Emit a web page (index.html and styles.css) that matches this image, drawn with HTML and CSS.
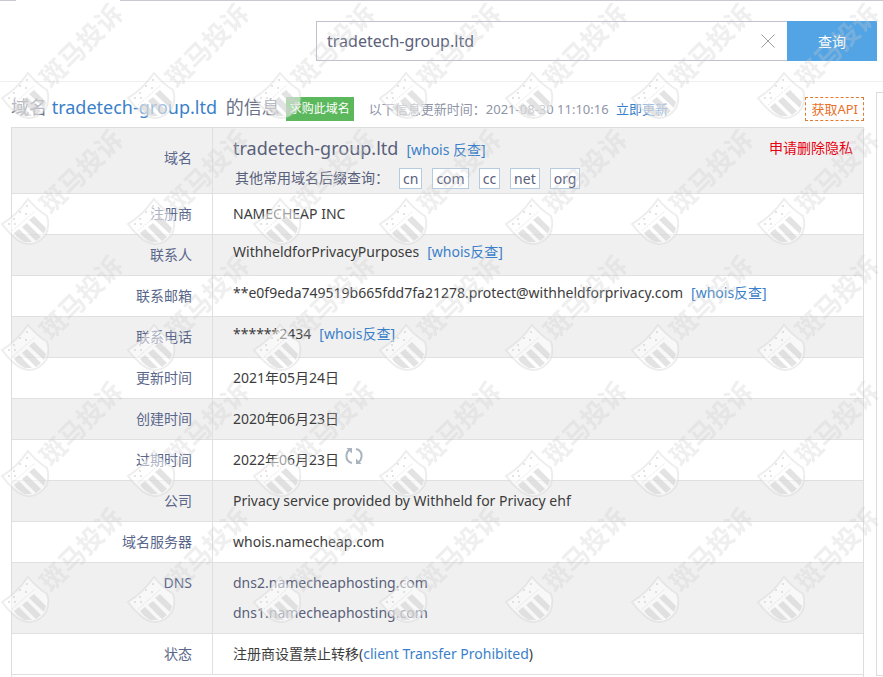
FILE: index.html
```html
<!DOCTYPE html>
<html lang="zh-CN">
<head>
    <meta charset="UTF-8">
    <meta name="viewport" content="width=device-width, initial-scale=1.0">
    <title>tradetech-group.ltd 域名信息</title>
    <link rel="stylesheet" href="styles.css">
</head>
<body>
    <div class="page">
        <header class="header">
            <form class="search">
                <div class="search-box">
                    <input type="text" value="tradetech-group.ltd" aria-label="域名">
                    <button type="button" class="clear" aria-label="清空">
                        <svg width="14" height="14" viewBox="0 0 14 14"><path d="M0.5 0.5l13 13M13.5 0.5l-13 13" stroke="#9a9da3" fill="none"/></svg>
                    </button>
                </div>
                <button type="submit" class="submit">查询</button>
            </form>
        </header>

        <div class="main">
            <main class="content">
                <div class="title-bar">
                    <h1>域名 <a href="#">tradetech-group.ltd</a> 的信息</h1>
                    <a href="#" class="buy">求购此域名</a>
                    <p class="updated">以下信息更新时间：<span>2021-08-30 11:10:16</span> <a href="#">立即更新</a></p>
                    <a href="#" class="api">获取API</a>
                </div>

                <div class="table-wrap">
                    <table class="whois">
                        <tr>
                            <th scope="row" class="domain-label">域名</th>
                            <td class="domain">
                                <div class="domain-line">
                                    <div><span class="name">tradetech-group.ltd</span><a href="#" class="reverse">[whois 反查]</a></div>
                                    <a href="#" class="remove">申请删除隐私</a>
                                </div>
                                <div class="suffixes">
                                    <span>其他常用域名后缀查询：</span>
                                    <a href="#">cn</a>
                                    <a href="#">com</a>
                                    <a href="#">cc</a>
                                    <a href="#">net</a>
                                    <a href="#">org</a>
                                </div>
                            </td>
                        </tr>
                        <tr><th scope="row">注册商</th><td>NAMECHEAP INC</td></tr>
                        <tr><th scope="row">联系人</th><td class="contact">WithheldforPrivacyPurposes<a href="#" class="reverse">[whois反查]</a></td></tr>
                        <tr><th scope="row">联系邮箱</th><td class="contact">**e0f9eda749519b665fdd7fa21278.protect@withheldforprivacy.com<a href="#" class="reverse">[whois反查]</a></td></tr>
                        <tr><th scope="row">联系电话</th><td class="contact">******2434<a href="#" class="reverse">[whois反查]</a></td></tr>
                        <tr><th scope="row">更新时间</th><td>2021年05月24日</td></tr>
                        <tr><th scope="row">创建时间</th><td>2020年06月23日</td></tr>
                        <tr>
                            <th scope="row">过期时间</th>
                            <td>2022年06月23日
                                <button type="button" class="refresh" aria-label="刷新">
                                    <svg width="18" height="18" viewBox="0 0 18 18" fill="none" stroke="#a9b4bf" stroke-width="2">
                                        <path d="M7 16C3 15 1 12 1.500 8C1.800 5.500 3 3.500 5 2.500"/>
                                        <path d="M11 2C15 3 17 6 16.500 10C16.200 12.500 15 14.500 13 15.500"/>
                                        <path d="M1.500 1H7V6.500zM11 11.500V17H16.500z" fill="#a9b4bf" stroke="none"/>
                                    </svg>
                                </button>
                            </td>
                        </tr>
                        <tr><th scope="row">公司</th><td>Privacy service provided by Withheld for Privacy ehf</td></tr>
                        <tr><th scope="row">域名服务器</th><td>whois.namecheap.com</td></tr>
                        <tr>
                            <th scope="row">DNS</th>
                            <td class="dns">
                                <div>dns2.namecheaphosting.com</div>
                                <div>dns1.namecheaphosting.com</div>
                            </td>
                        </tr>
                        <tr><th scope="row">状态</th><td>注册商设置禁止转移(<a href="#">client Transfer Prohibited</a>)</td></tr>
                    </table>
                </div>
            </main>
            <aside class="side"></aside>
        </div>

        <!-- repeated watermark over the page -->
        <svg class="watermark" aria-hidden="true">
            <defs>
                <pattern id="mark" width="126" height="126" patternUnits="userSpaceOnUse">
                    <text class="mark-text" transform="translate(51 89) rotate(-45)">斑马投诉</text>
                    <path d="M2 98Q17 89 28 73Q36 83 47 90Q50 99 46 108Q39 118 29 118Q20 117 14 111Q8 106 2 98z" fill="#fff" fill-opacity="0.5" stroke="#ccc" stroke-opacity="0.35" stroke-width="2"/>
                    <path d="M14 107l5 -4l13 13l-7 0Q18 113 14 107zM22 101l5 -4l14 14l-5 4zM29 94l5 -4l12 12l-2 6z" fill="#ccc" fill-opacity="0.55"/>
                    <path d="M12 105L35 85" stroke="#ccc" stroke-opacity="0.45" stroke-dasharray="2 1"/>
                    <g fill="#ccc" fill-opacity="0.7">
                        <circle cx="9" cy="98" r="1"/>
                        <circle cx="14" cy="93" r="1"/>
                        <circle cx="20" cy="86" r="1"/>
                        <circle cx="27" cy="80" r="1"/>
                        <circle cx="15" cy="98" r="1"/>
                        <circle cx="26" cy="88" r="1"/>
                    </g>
                </pattern>
            </defs>
            <rect width="100%" height="630" fill="url(#mark)"/>
        </svg>
    </div>
</body>
</html>
```

FILE: styles.css
```css
* {
    box-sizing: border-box;
}
body {
    margin: 0;
    background: #fff;
    color: #3c3c3c;
    font-family: "Noto Sans", "Noto Sans CJK SC", sans-serif;
    font-size: 14px;
}
a {
    color: #3b7fc9;
    text-decoration: none;
}
button {
    font-family: inherit;
    border: none;
    cursor: pointer;
}
.page {
    position: relative;
    overflow: hidden;
}

.header {
    border-bottom: 1px solid #eee;
    padding: 21px 6px 20px 316px;
    background: linear-gradient(to right, #c9c9d3 16px, #fff 16px, #fff 120px, #c9c9d3 120px) no-repeat;
    background-size: 100% 1px;
}
.search {
    display: flex;
    height: 40px;
}
.search-box {
    flex: 1;
    display: flex;
    align-items: center;
    border: 1px solid #bfc2cc;
    border-right: none;
}
.search-box input {
    flex: 1;
    min-width: 0;
    border: none;
    outline: none;
    padding: 0 10px;
    font-family: inherit;
    font-size: 16px;
    color: #59607a;
}
.clear {
    background: none;
    padding: 0 12px;
    line-height: 0;
}
.submit {
    width: 90px;
    background-color: #52a4e4;
    color: #fff;
    font-size: 14px;
}

.main {
    display: flex;
    padding-left: 11px;
}
.content {
    flex: 1;
    min-width: 0;
}
.side {
    width: 7px;
    height: 584px;
    margin: 10px 0 0 12px;
    border: 1px solid #ddd;
    border-right: none;
}

.title-bar {
    display: flex;
    align-items: center;
    height: 45px;
    padding-top: 8px;
}
h1 {
    margin: 0;
    padding-bottom: 4px;
    font-size: 18px;
    font-weight: normal;
    line-height: 24px;
    color: #6b7187;
}
h1 a {
    margin-right: 4px;
}
.buy {
    margin-left: 6px;
    padding: 0 4px;
    background-color: #5cb85c;
    color: #fff;
    font-size: 12px;
    line-height: 24px;
}
.updated {
    margin: 0 0 0 15px;
    font-size: 13px;
    color: #8f95a6;
}
.updated span {
    margin-right: 4px;
}
.api {
    margin-left: auto;
    padding: 0 5px;
    border: 1px dashed #e07b2e;
    color: #e8702a;
    font-size: 13px;
    line-height: 22px;
}

.table-wrap {
    border: 1px solid #ddd;
    border-bottom: none;
    padding-bottom: 2px;
}
.whois {
    width: 100%;
    border-collapse: separate;
    border-spacing: 0;
}
.whois tr:nth-child(odd) {
    background-color: #f0f0f0;
}
.whois th,
.whois td {
    height: 41px;
    padding: 0 20px;
    border-bottom: 1px solid #e0e0e0;
    line-height: 40px;
    vertical-align: top;
}
.whois th {
    width: 201px;
    border-right: 1px solid #e0e0e0;
    font-weight: normal;
    text-align: right;
    color: #59668a;
}
.whois td.contact {
    line-height: 34px;
}
.whois th.domain-label {
    padding-top: 10px;
}
.whois td.domain {
    height: 66px;
    padding: 6px 10px 0 20px;
    line-height: 28px;
    color: #59607a;
}
.domain-line {
    display: flex;
    justify-content: space-between;
    height: 30px;
}
.name {
    font-size: 18px;
}
.reverse {
    margin-left: 8px;
}
.remove {
    color: #e60012;
}
.suffixes {
    display: flex;
    align-items: center;
    gap: 10px;
    padding-left: 2px;
}
.suffixes a {
    padding: 0 3px;
    border: 1px solid #b5cbe0;
    background-color: #fff;
    color: #59607a;
    line-height: 19px;
}
.whois td.dns {
    padding-top: 5px;
    padding-bottom: 5px;
    line-height: 30px;
    color: #59607a;
}
.refresh {
    margin-left: 2px;
    padding: 0;
    background: none;
    line-height: 0;
}

.watermark {
    position: absolute;
    top: 0;
    left: 0;
    width: 100%;
    height: 100%;
    pointer-events: none;
}
.mark-text {
    font-size: 26px;
    font-weight: bold;
    fill: #ccc;
    fill-opacity: 0.3;
}
```
